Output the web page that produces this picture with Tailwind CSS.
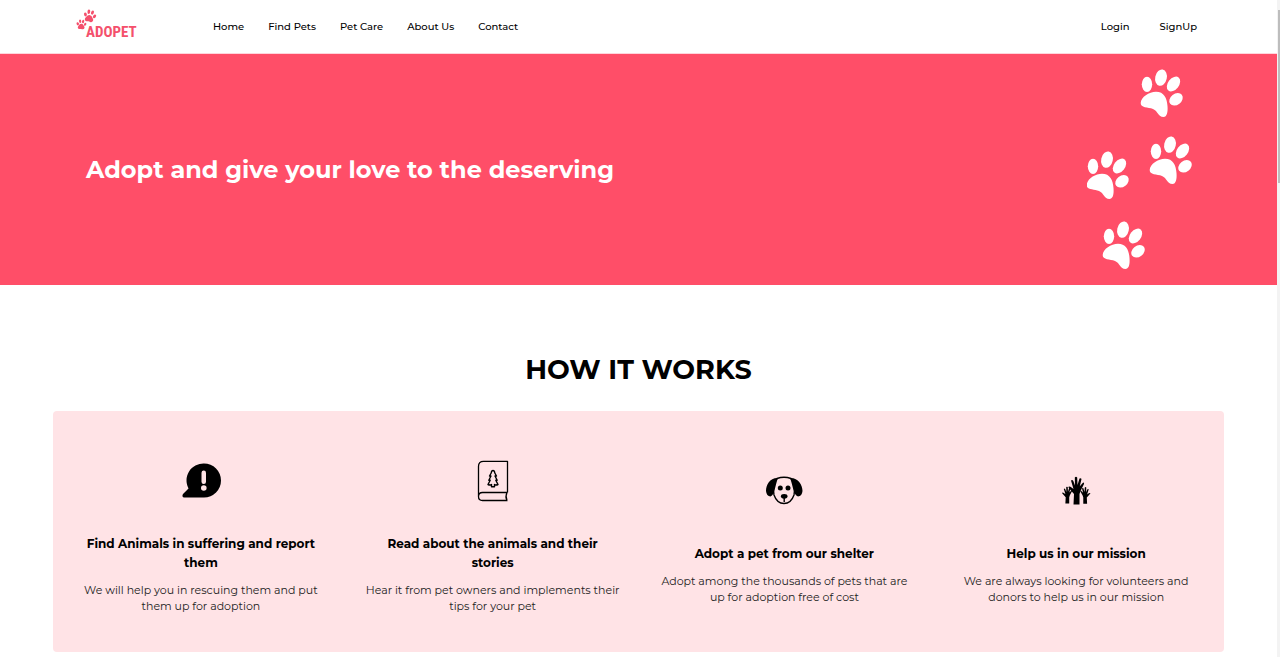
<!DOCTYPE html>
<html lang="en">
<head>
    <meta charset="UTF-8">
    <meta name="viewport" content="width=device-width, initial-scale=1.0">
    <title>Adopet</title>
    <script src="https://cdn.jsdelivr.net/npm/@tailwindcss/browser@4"></script>
</head>
<body class="relative h-screen overflow-hidden bg-white pr-[3px] font-[Montserrat,Inter,sans-serif] text-black">

    <!-- Navbar -->
    <header class="flex h-[54px] items-center border-b border-[#ffd5dc] pl-[76px] pr-20 text-[10px] font-medium">
        <a href="#" aria-label="Adopet home">
            <svg class="h-9 w-[62px] fill-[#f4506c]" viewBox="0 0 62 36">
                <g id="smallPaw" transform="translate(8 1) rotate(12 6 6)">
                    <ellipse cx="1.2" cy="5.4" rx="1.4" ry="2" transform="rotate(-25 1.2 5.4)" />
                    <ellipse cx="4" cy="2.1" rx="1.4" ry="2.2" transform="rotate(-8 4 2.1)" />
                    <ellipse cx="7.7" cy="2.1" rx="1.4" ry="2.2" transform="rotate(8 7.7 2.1)" />
                    <ellipse cx="10.5" cy="5.4" rx="1.4" ry="2" transform="rotate(25 10.5 5.4)" />
                    <path d="M5.8 5.2C7.8 5.2 8.5 7 9.6 8.4C10.6 9.8 9.8 11.9 8 11.9C7 11.9 6.6 11.5 5.8 11.5C5 11.5 4.6 11.9 3.6 11.9C1.8 11.9 1 9.8 2 8.4C3.1 7 3.8 5.2 5.8 5.2Z" />
                </g>
                <use href="#smallPaw" transform="translate(-5.5 9.5) rotate(-8 14 7) scale(.8)" />
                <text x="10" y="28" class="font-['Liberation_Sans_Narrow','Roboto_Condensed',Roboto,sans-serif] text-[15px] font-bold">ADOPET</text>
            </svg>
        </a>
        <nav class="ml-[75px] flex gap-6">
            <a href="#">Home</a>
            <a href="#">Find Pets</a>
            <a href="#">Pet Care</a>
            <a href="#">About Us</a>
            <a href="#">Contact</a>
        </nav>
        <div class="ml-auto flex gap-[30px]">
            <a href="#">Login</a>
            <a href="#">SignUp</a>
        </div>
    </header>

    <!-- Hero -->
    <section class="flex h-[231px] items-center justify-between bg-[#ff4e68] pl-[86px] pr-[83px]">
        <h1 class="text-[24px] font-bold text-white">Adopt and give your love to the deserving</h1>
        <svg class="h-[204px] w-[107px] fill-white" viewBox="0 0 107 204" aria-hidden="true">
            <g id="paw" transform="translate(54 1)">
                <ellipse cx="6" cy="15.3" rx="5.2" ry="7.6" />
                <ellipse cx="20" cy="8.6" rx="5.8" ry="8.3" transform="rotate(12 20 8.6)" />
                <ellipse cx="32.5" cy="15" rx="5.5" ry="8.3" transform="rotate(38 32.5 15)" />
                <ellipse cx="35" cy="30.3" rx="5.5" ry="7.4" transform="rotate(52 35 30.3)" />
                <path d="M-.3 34C0 28 8 22.7 15 22.7C23 22.7 26 29 26.5 37C27 43 26 48 22.5 48C17 48 17 42 12 40C7 38-.6 39-.3 34Z" />
            </g>
            <use href="#paw" x="9" y="67" />
            <use href="#paw" x="-54" y="82" />
            <use href="#paw" x="-38" y="152" />
        </svg>
    </section>

    <!-- How it works -->
    <section class="px-[53px] pt-[66px]">
        <h2 class="text-center text-[27px] leading-[38px] font-bold">HOW IT WORKS</h2>
        <div class="mt-[22px] grid h-[241px] grid-cols-4 items-center rounded bg-[#ffe3e6] px-0.5 text-center">
            <article class="flex flex-col items-center px-4">
                <svg class="size-16" viewBox="0 0 64 64" aria-hidden="true">
                    <path d="M35 14.5A17 17 0 0 1 35 48.5H15.5C13 48.5 13 46 14.5 44.5L19.5 39.5A17 17 0 0 1 35 14.5Z" />
                    <rect x="32.5" y="21.5" width="4.5" height="13.5" rx="2.2" fill="#ffe3e6" />
                    <circle cx="34.8" cy="39" r="2.8" fill="#ffe3e6" />
                </svg>
                <h3 class="mt-[21px] px-1 text-[12px] leading-[19px] font-bold">Find Animals in suffering and report them</h3>
                <p class="mt-2.5 text-[11px] leading-4 text-[#222]">We will help you in rescuing them and put them up for adoption</p>
            </article>
            <article class="flex flex-col items-center px-4">
                <svg class="size-16 fill-none stroke-black" viewBox="0 0 64 64" stroke-width="1.3" stroke-linejoin="round" aria-hidden="true">
                    <path d="M46.5 43.5V12.3H22.5Q17.5 12.3 17.5 17.3V47.5Q17.5 51.5 21.5 51.5H46.5M46.5 43.5H21.5Q17.5 43.5 17.5 47.5M46 43.5Q44 47.5 46 51.5" />
                    <path stroke-width="1.4" d="M32 21.5Q33.5 21.5 33.8 24L35.5 27H34L36.2 31.2H34.8L37 35.5Q35 36.5 33.5 35.5V37.8H30.5V35.5Q29 36.5 27 35.5L29.2 31.2H27.8L30 27H28.5L30.2 24Q30.5 21.5 32 21.5Z" />
                </svg>
                <h3 class="mt-[21px] px-1 text-[12px] leading-[19px] font-bold">Read about the animals and their stories</h3>
                <p class="mt-2.5 text-[11px] leading-4 text-[#222]">Hear it from pet owners and implements their tips for your pet</p>
            </article>
            <article class="flex flex-col items-center px-4">
                <svg class="size-16" viewBox="0 0 64 64" aria-hidden="true">
                    <path d="M25 19.5Q32 17 39 19.5C42.5 24 43 31 42 36Q39 44.5 32 44.5Q25 44.5 22 36C21 31 21.5 24 25 19.5Z" fill="none" stroke="#000" stroke-width="1.4" />
                    <path d="M26 19C18 18.5 14 26 14 32Q14.5 37 18.5 37.5C23 36 23 26 26 19ZM38 19C46 18.5 50.5 26 50.5 32Q50 37 46 37.5C41 36 41 26 38 19Z" />
                    <circle cx="28.3" cy="29" r="2.5" />
                    <circle cx="36" cy="29" r="2.5" />
                    <ellipse cx="32.2" cy="37.3" rx="3.3" ry="2.4" />
                    <path d="M32.2 38V43" fill="none" stroke="#000" stroke-width="1.4" />
                </svg>
                <h3 class="mt-[21px] px-1 text-[12px] leading-[19px] font-bold">Adopt a pet from our shelter</h3>
                <p class="mt-2.5 text-[11px] leading-4 text-[#222]">Adopt among the thousands of pets that are up for adoption free of cost</p>
            </article>
            <article class="flex flex-col items-center px-4">
                <svg class="size-16" viewBox="0 0 64 64" aria-hidden="true">
                    <path id="hand" d="M29.5 45.5L30 35L26.5 31L24.2 28Q25.5 26.8 27.5 28.5L29.5 30L27 21.5Q28.3 20.2 29.3 22L31 26.5L30.8 18.5Q32 17 33.2 18.5L33.5 26L35.5 19.5Q37 18.8 37.5 20L35.8 27.3L39.2 23.5Q40.6 23.5 40 25L36.5 32L35.5 35V45.5Z" />
                    <use href="#hand" transform="translate(2.5 16.8) scale(.64 .61)" />
                    <use href="#hand" transform="translate(62 17.4) scale(-.64 .6)" />
                </svg>
                <h3 class="mt-[21px] px-1 text-[12px] leading-[19px] font-bold">Help us in our mission</h3>
                <p class="mt-2.5 text-[11px] leading-4 text-[#222]">We are always looking for volunteers and donors to help us in our mission</p>
            </article>
        </div>
    </section>

    <!-- Page scrollbar -->
    <div class="absolute inset-y-0 right-0 w-[3px] bg-[#f3f3f3] pl-px pt-2.5" aria-hidden="true">
        <div class="h-[173px] bg-[#bdbdbd]"></div>
    </div>
</body>
</html>
